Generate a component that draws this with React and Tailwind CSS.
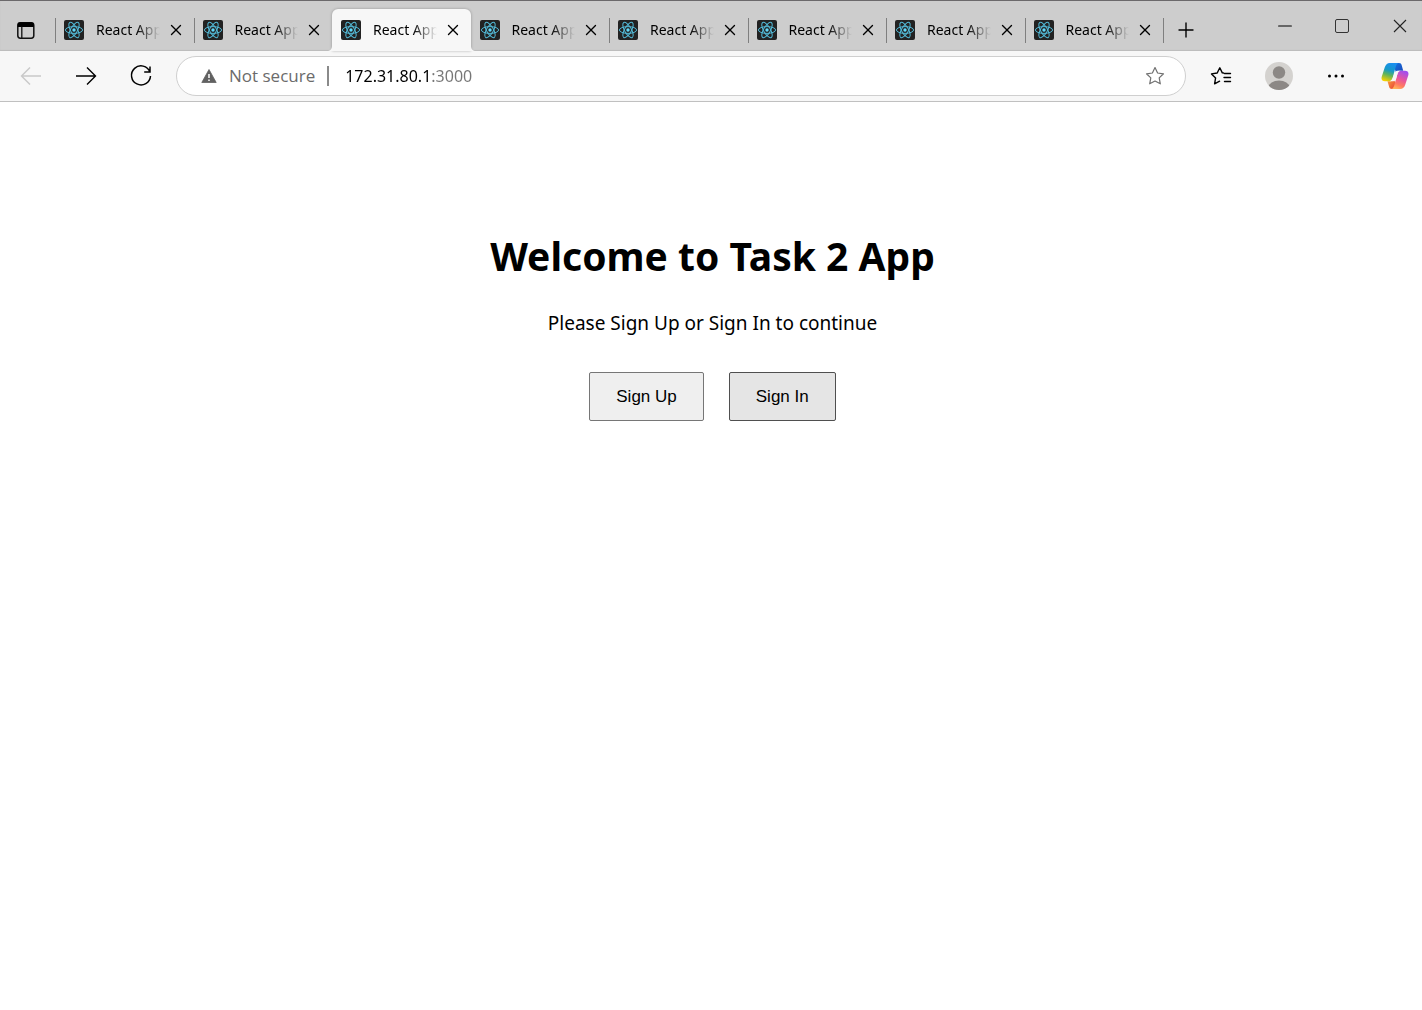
import { X, Plus, Minus } from "lucide-react";

const TABS = [0, 1, 2, 3, 4, 5, 6, 7];
const ACTIVE = 2;

function ReactFavicon() {
  return (
    <svg className="size-5 shrink-0" viewBox="0 0 20 20" fill="none" aria-hidden="true">
      <rect width="20" height="20" rx="2" fill="#222222" />
      <g stroke="#53b9d6" strokeWidth="1">
        <ellipse cx="10" cy="10" rx="8.6" ry="3.4" />
        <ellipse cx="10" cy="10" rx="8.6" ry="3.4" transform="rotate(60 10 10)" />
        <ellipse cx="10" cy="10" rx="8.6" ry="3.4" transform="rotate(120 10 10)" />
      </g>
      <circle cx="10" cy="10" r="1.7" fill="#61dafb" />
    </svg>
  );
}

function Flare({ className }) {
  return (
    <svg className={className} viewBox="0 0 5 5" aria-hidden="true">
      <path d="M5 0v5H0C3 5 5 3 5 0Z" fill="#f7f7f7" />
    </svg>
  );
}

function Tab({ index }) {
  const active = index === ACTIVE;
  const separated = !active && index !== ACTIVE + 1;
  return (
    <div
      role="tab"
      aria-selected={active}
      className={
        active
          ? "relative flex h-[42px] min-w-0 flex-1 items-center rounded-t-md bg-[#f7f7f7] shadow-[0_0_3px_rgba(0,0,0,0.28)]"
          : "relative flex h-[42px] min-w-0 flex-1 items-center"
      }
    >
      {active && (
        <>
          <Flare className="absolute -left-[5px] bottom-0 size-[5px]" />
          <Flare className="absolute -right-[5px] bottom-0 size-[5px] -scale-x-100" />
        </>
      )}
      <span className={separated ? "mr-2 h-[25px] w-px bg-[#7f7f7f]" : "mr-2 h-[25px] w-px"} />
      <ReactFavicon />
      <span className="ml-3 min-w-0 flex-1 overflow-hidden whitespace-nowrap text-sm text-black [mask-image:linear-gradient(to_right,#000_calc(100%-24px),transparent)]">
        React App
      </span>
      <button aria-label="Close tab" className="ml-1 mr-1.5 flex size-6 items-center justify-center">
        <X className="size-[18px] text-black" strokeWidth={1.8} />
      </button>
    </div>
  );
}

function TabStrip() {
  return (
    <div className="flex h-[51px] items-end border-t border-[#6b696b] bg-[#cdcdcd] shadow-[inset_0_-1px_1px_#bcbcbc]">
      <button aria-label="Tab actions" className="flex h-[42px] w-[55px] shrink-0 items-center pl-4">
        <svg className="size-5" viewBox="0 0 20 20" fill="none" aria-hidden="true">
          <rect x="1.8" y="2.8" width="16" height="15.4" rx="2.6" stroke="#111" strokeWidth="1.5" />
          <path d="M1.8 7V4.6C1.8 3 3 2.2 4.4 2.2h10.8c1.6 0 2.6 1 2.6 2.4V7Z" fill="#000" />
          <path d="M5.8 6.5V18" stroke="#111" strokeWidth="1.3" />
        </svg>
      </button>
      <div role="tablist" className="flex min-w-0 max-w-[1108px] flex-1">
        {TABS.map((i) => (
          <Tab key={i} index={i} />
        ))}
      </div>
      <div className="flex h-[42px] shrink-0 items-center">
        <span className="h-[25px] w-px bg-[#7f7f7f]" />
        <button aria-label="New tab" className="ml-2 flex size-7 items-center justify-center">
          <Plus className="size-6 text-black" strokeWidth={1.4} />
        </button>
      </div>
      <div className="ml-auto flex h-[50px] shrink-0">
        <button aria-label="Minimize" className="flex w-[57px] items-center justify-center">
          <Minus className="size-[22px] text-black" strokeWidth={1.1} />
        </button>
        <button aria-label="Maximize" className="flex w-[57px] items-center justify-center">
          <span className="size-[14px] rounded-[2px] border border-[#333]" />
        </button>
        <button aria-label="Close" className="flex w-[52px] items-center justify-end pr-3.5">
          <svg className="size-4" viewBox="0 0 16 16" fill="none" stroke="#222" strokeWidth="1.1" aria-hidden="true">
            <path d="m2 2 12 12M14 2 2 14" />
          </svg>
        </button>
      </div>
    </div>
  );
}

function CopilotIcon() {
  return (
    <svg className="size-7" viewBox="0 0 28 28" aria-hidden="true">
      <defs>
        <linearGradient id="cp-left" x1="0.6" y1="0" x2="0.3" y2="1">
          <stop offset="0" stopColor="#1b8ff0" />
          <stop offset="0.4" stopColor="#1699c8" />
          <stop offset="0.65" stopColor="#5fb35c" />
          <stop offset="1" stopColor="#f5d000" />
        </linearGradient>
        <linearGradient id="cp-right" x1="0.7" y1="0" x2="0.3" y2="1">
          <stop offset="0" stopColor="#a04df0" />
          <stop offset="0.45" stopColor="#e8569c" />
          <stop offset="0.75" stopColor="#ff7a62" />
          <stop offset="1" stopColor="#ffb55a" />
        </linearGradient>
        <linearGradient id="cp-top" x1="0" y1="0" x2="1" y2="1">
          <stop offset="0" stopColor="#1673e0" />
          <stop offset="1" stopColor="#1947b8" />
        </linearGradient>
        <linearGradient id="cp-bottom" x1="0" y1="0" x2="1" y2="1">
          <stop offset="0" stopColor="#f8a83a" />
          <stop offset="1" stopColor="#e83c3c" />
        </linearGradient>
      </defs>
      <path d="M14.800 1H18c1.600 0 2.300.8 2.700 2.200l1.500 5.600H19c-2 0-3.200.6-4 2L13.500 6c.5-2 .6-3.800 1.300-5Z" fill="url(#cp-top)" />
      <path d="M13.200 27H11c-1.800 0-2.500-.8-2.900-2.200L6.500 19.200h2.700c2 0 3.200-.7 3.900-2.200L14.500 22c-.5 2-.6 3.800-1.300 5Z" fill="url(#cp-bottom)" />
      <path d="M17.500 1H8.800C6.200 1 4.600 2.800 3.700 5.600L.8 14.600C-.1 17.400 1.100 19.200 4 19.200h4c2 0 3-1.200 3.600-3.200l2.900-10.500C15.200 3 16 1.300 17.500 1Z" fill="url(#cp-left)" />
      <path d="M10.500 27h8.700c2.600 0 4.200-1.800 5.100-4.600l2.900-9c.9-2.800-.3-4.600-3.200-4.600h-4c-2 0-3 1.200-3.600 3.200l-2.900 10.500C12.800 25 12 26.700 10.500 27Z" fill="url(#cp-right)" />
      <path d="M14 10.500c.7-1.300 1.700-1.700 3.200-1.700H20c-2 .2-2.900 1.300-3.500 3.200L15 17.300c-.5 1.400-1.400 1.900-2.800 1.900H8.500c1.800-.3 2.600-1.500 3.100-3.200Z" fill="#f7f7f7" />
    </svg>
  );
}

const STAR = "M10 1.600l2.600 5.400 5.900.8-4.300 4.100 1.100 5.900L10 15l-5.300 2.800 1.100-5.900L1.500 7.800l5.900-.8Z";

function Toolbar() {
  return (
    <div className="flex h-[51px] items-center border-b border-[#c0c0c0] bg-[#f7f7f7] pr-[13px]">
      <nav className="flex shrink-0 items-center gap-[31px] pl-[19px]">
        <button aria-label="Back">
          <svg className="size-6" viewBox="0 0 24 24" fill="none" stroke="#c9c9c9" strokeWidth="1.4" aria-hidden="true">
            <path d="M22 12H2.500M11 3.500 2.500 12l8.500 8.500" />
          </svg>
        </button>
        <button aria-label="Forward">
          <svg className="size-6" viewBox="0 0 24 24" fill="none" stroke="#000" strokeWidth="1.4" aria-hidden="true">
            <path d="M2 12h19.500M13 3.500l8.500 8.500-8.500 8.500" />
          </svg>
        </button>
        <button aria-label="Refresh">
          <svg className="size-6" viewBox="0 0 24 24" fill="none" stroke="#000" strokeWidth="1.5" aria-hidden="true">
            <path d="M20.900 8A9.500 9.500 0 1 0 21.500 12M21 2.500V8h-5.800" />
          </svg>
        </button>
      </nav>
      <div className="ml-[23px] flex h-10 min-w-0 flex-1 items-center rounded-full border border-[#cfcfcf] bg-white pl-6 pr-5">
        <svg className="size-4 shrink-0" viewBox="0 0 16 16" aria-hidden="true">
          <path d="M8 1.500 15.200 14.500H.8Z" fill="#616161" stroke="#616161" strokeWidth="0.800" strokeLinejoin="round" />
          <path d="M8 6v4M8 11.400v1.600" stroke="#fff" strokeWidth="1.500" />
        </svg>
        <span className="ml-3 shrink-0 font-['Open_Sans',sans-serif] text-[17px] text-[#6b6b6b]">Not secure</span>
        <span className="ml-3 h-5 w-0.5 shrink-0 bg-[#8a8a8a]" />
        <input
          aria-label="Address"
          defaultValue="172.31.80.1:3000"
          className="ml-4 min-w-0 flex-1 bg-[linear-gradient(to_right,#000_86px,#767676_86px)] bg-clip-text text-base text-transparent outline-none"
        />
        <button aria-label="Add to favorites" className="shrink-0">
          <svg className="size-5" viewBox="0 0 20 20" fill="none" stroke="#707070" strokeWidth="1.200" strokeLinejoin="round" aria-hidden="true">
            <path d={STAR} />
          </svg>
        </button>
      </div>
      <div className="ml-6 flex shrink-0 items-center">
        <button aria-label="Favorites">
          <svg className="h-5 w-[22px]" viewBox="0 0 22 20" fill="none" stroke="#000" strokeWidth="1.400" strokeLinejoin="round" strokeLinecap="round" aria-hidden="true">
            <path d="M13.500 7 12.300 6.900 9.800 1.800 7.200 7l-5.700.9 4.100 4-1 5.900 5-2.600M14.500 7.500h6M14 11.500h6.500M14.500 15.500h6" />
          </svg>
        </button>
        <button aria-label="Profile" className="ml-[33px]">
          <svg className="size-7" viewBox="0 0 28 28" aria-hidden="true">
            <defs>
              <clipPath id="avatar">
                <circle cx="14" cy="14" r="14" />
              </clipPath>
            </defs>
            <g clipPath="url(#avatar)">
              <rect width="28" height="28" fill="#d4d2cf" />
              <circle cx="14" cy="10.500" r="6.200" fill="#8c8885" />
              <ellipse cx="14" cy="25" rx="10.400" ry="6.500" fill="#8c8885" />
            </g>
          </svg>
        </button>
        <button aria-label="Settings and more" className="ml-[34px]">
          <svg className="h-5 w-[18px]" viewBox="0 0 18 20" aria-hidden="true">
            <circle cx="2.500" cy="10" r="1.500" />
            <circle cx="9" cy="10" r="1.500" />
            <circle cx="15.500" cy="10" r="1.500" />
          </svg>
        </button>
        <button aria-label="Copilot" className="ml-9">
          <CopilotIcon />
        </button>
      </div>
    </div>
  );
}

export default function App() {
  return (
    <div className="min-h-screen bg-white font-['Noto_Sans',sans-serif] text-black">
      <header>
        <TabStrip />
        <Toolbar />
      </header>
      <main className="flex flex-col items-center pl-[3px] pt-[126px] text-center">
        <h1 className="text-[39px] font-bold leading-[56px]">Welcome to Task 2 App</h1>
        <p className="mt-[25px] text-[19px] leading-7">Please Sign Up or Sign In to continue</p>
        <div className="mt-[35px] flex gap-[25px] font-['Liberation_Sans',sans-serif] text-[17px]">
          <button className="h-[49px] rounded-[2px] border border-[#767676] bg-[#efefef] px-[26px]">Sign Up</button>
          <button className="h-[49px] rounded-[2px] border border-[#4f4f4f] bg-[#e5e5e5] px-[26px]">Sign In</button>
        </div>
      </main>
    </div>
  );
}
